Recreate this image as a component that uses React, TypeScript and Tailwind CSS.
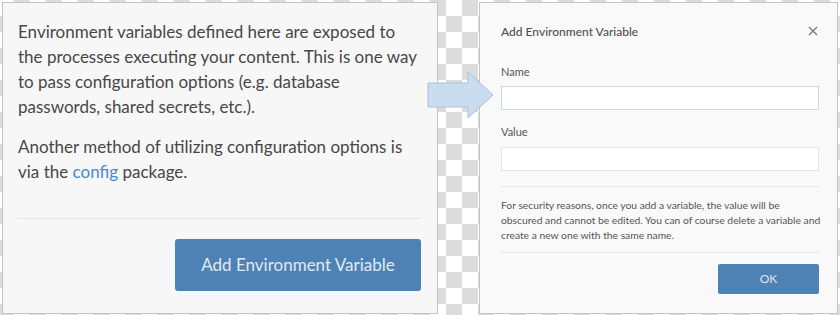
import React from "react";

export default function App() {
  return (
    <div
      className="relative w-[840px] h-[315px] flex justify-between p-[2px] bg-[image:repeating-conic-gradient(#dcdcdc_0_25%,#ffffff_0_50%)] bg-size-[32px_32px] bg-position-[-2px_0px]"
      style={{ fontFamily: "Lato, 'Noto Sans', sans-serif" }}
    >
      {/* Left panel */}
      <div className="w-[436px] h-[312px] border border-[#c4c4c4] bg-[#f7f7f7] flex flex-col pt-[16px] pl-[15px] pr-[16px] pb-[22px]">
        <p className="text-[17px] leading-[25px] text-[#474747]">
          Environment variables defined here are exposed to the processes executing your content. This is one way to pass configuration options (e.g. database passwords, shared secrets, etc.).
        </p>
        <p className="mt-[15px] text-[17px] leading-[25px] text-[#474747]">
          Another method of utilizing configuration options is via the <span className="text-[#4a89c8]">config</span> package.
        </p>
        <div className="mt-auto border-t border-[#e6e6e6]" />
        <div className="mt-[20px] flex justify-end">
          <button className="w-[246px] h-[52px] rounded-[3px] bg-[#4f82b4] text-[#e1e9f2] text-[17px]">
            Add Environment Variable
          </button>
        </div>
      </div>

      {/* Right panel */}
      <div className="w-[359px] h-[312px] border border-[#c4c4c4] bg-[#f9f9f9] flex flex-col pl-[21px] pr-[18px] pt-[20px] pb-[18px] text-[#555]">
        <div className="flex items-center justify-between h-[18px]">
          <span className="text-[12px] font-medium text-[#505050]">Add Environment Variable</span>
          <svg width="10" height="10" viewBox="0 0 10 10" className="mr-[1px] -mt-[3px]">
            <path d="M1 1L9 9M9 1L1 9" stroke="#7a7a7a" strokeWidth="1.4" />
          </svg>
        </div>
        <label className="mt-[24px] text-[11px] leading-[14px] text-[#555]">Name</label>
        <div className="mt-[7px] h-[24px] bg-white border border-[#c9d9ea]" />
        <label className="mt-[15px] text-[11px] leading-[14px] text-[#555]">Value</label>
        <div className="mt-[8px] h-[24px] bg-white border border-[#e4e4e4]" />
        <div className="mt-[15px] border-t border-[#e8e8e8]" />
        <p className="mt-[11px] text-[10.3px] leading-[15px] text-[#555] whitespace-nowrap">
          For security reasons, once you add a variable, the value will be
          <br />
          obscured and cannot be edited. You can of course delete a variable and
          <br />
          create a new one with the same name.
        </p>
        <div className="mt-[9px] border-t border-[#e8e8e8]" />
        <div className="mt-[11px] flex justify-end">
          <button className="w-[101px] h-[30px] rounded-[2px] bg-[#4f82b4] text-[#dde6f0] text-[12px]">OK</button>
        </div>
      </div>

      {/* Arrow overlay */}
      <svg
        className="absolute left-[427px] top-[71px]"
        width="70"
        height="49"
        viewBox="0 0 70 49"
      >
        <polygon
          points="1,12 41,12 41,1 66,24 41,47 41,36 1,36"
          fill="#cadcef"
          stroke="#a9c1db"
          strokeWidth="1"
        />
      </svg>
    </div>
  );
}
